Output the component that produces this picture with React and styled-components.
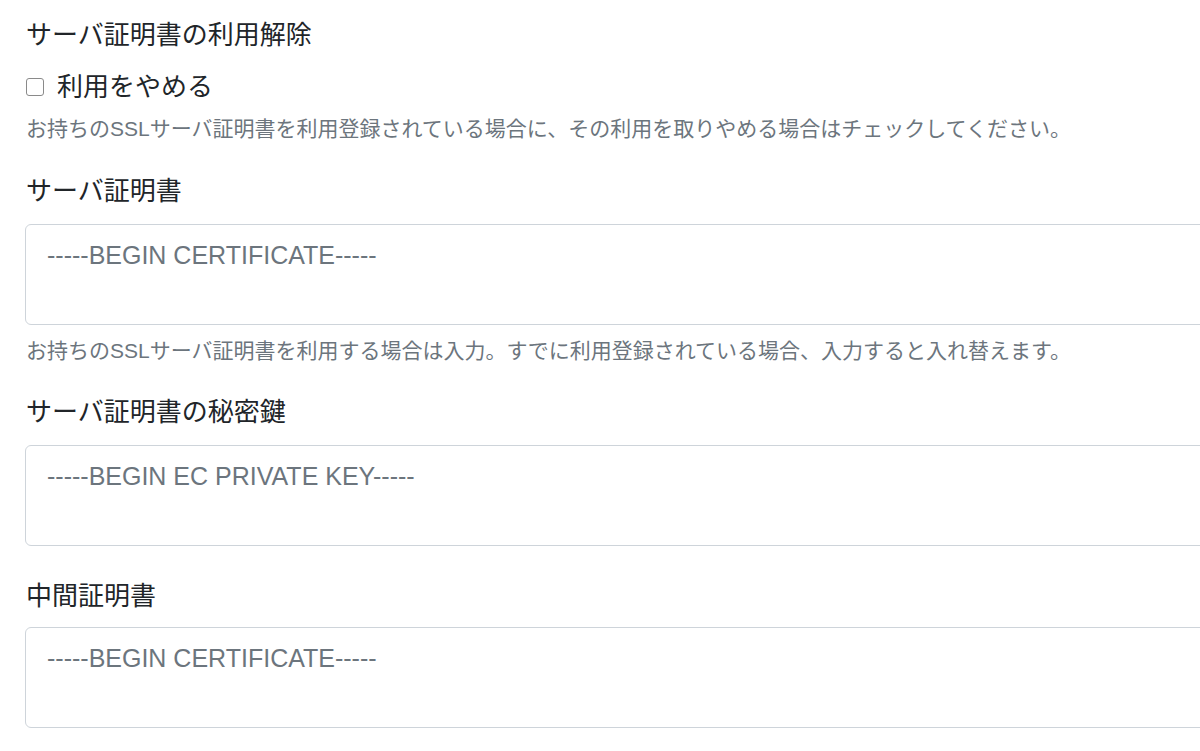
import React from "react";
import styled, { createGlobalStyle } from "styled-components";

const GlobalStyle = createGlobalStyle`
  html, body {
    margin: 0;
    padding: 0;
    background: #ffffff;
    overflow: hidden;
  }
  body {
    font-family: "Liberation Sans", "Noto Sans CJK JP", sans-serif;
    color: #212529;
  }
`;

const Page = styled.div`
  width: 1260px;
  padding: 16px 0 0 25px;
`;

const Group = styled.div`
  margin-bottom: ${(p) => p.$gap || 27}px;
`;

const Title = styled.div`
  font-size: 26px;
  line-height: 38px;
  margin-left: 1px;
`;

const CheckRow = styled.label`
  display: flex;
  align-items: center;
  gap: 13px;
  margin-top: 14px;
  margin-left: 1px;
  font-size: 26px;
  line-height: 38px;
  cursor: pointer;
`;

const Check = styled.input`
  appearance: none;
  flex: none;
  width: 18px;
  height: 18px;
  margin: 0;
  border: 1px solid #8a8a8a;
  border-radius: 3px;
  background: #fff;
`;

const Help = styled.div`
  margin-top: ${(p) => p.$top || 10}px;
  margin-left: 1px;
  font-size: 21px;
  line-height: 32px;
  color: #6c757d;
`;

const Label = styled.div`
  font-size: 26px;
  line-height: 38px;
  margin-left: 1px;
  margin-bottom: ${(p) => p.$gap || 14}px;
`;

const Area = styled.textarea`
  display: block;
  box-sizing: border-box;
  width: 100%;
  height: 101px;
  margin: 0;
  padding: 11px 21px;
  border: 1px solid #ced4da;
  border-radius: 6px;
  font-family: "Liberation Sans", "Noto Sans CJK JP", sans-serif;
  font-size: 25px;
  line-height: 38px;
  color: #212529;
  resize: none;
  outline: none;

  &::placeholder {
    color: #6c757d;
    opacity: 1;
  }
`;

const fields = [
  {
    label: "サーバ証明書",
    placeholder: "-----BEGIN CERTIFICATE-----",
    help: "お持ちのSSLサーバ証明書を利用する場合は入力。すでに利用登録されている場合、入力すると入れ替えます。",
    gap: 26,
  },
  {
    label: "サーバ証明書の秘密鍵",
    placeholder: "-----BEGIN EC PRIVATE KEY-----",
    gap: 31,
  },
  {
    label: "中間証明書",
    placeholder: "-----BEGIN CERTIFICATE-----",
    labelGap: 12,
  },
];

export default function App() {
  return (
    <>
      <GlobalStyle />
      <Page>
        <Group>
          <Title>サーバ証明書の利用解除</Title>
          <CheckRow>
            <Check type="checkbox" />
            利用をやめる
          </CheckRow>
          <Help $top={7}>
            お持ちのSSLサーバ証明書を利用登録されている場合に、その利用を取りやめる場合はチェックしてください。
          </Help>
        </Group>
        {fields.map((f) => (
          <Group key={f.label} $gap={f.gap}>
            <Label $gap={f.labelGap}>{f.label}</Label>
            <Area placeholder={f.placeholder} />
            {f.help && <Help>{f.help}</Help>}
          </Group>
        ))}
      </Page>
    </>
  );
}
